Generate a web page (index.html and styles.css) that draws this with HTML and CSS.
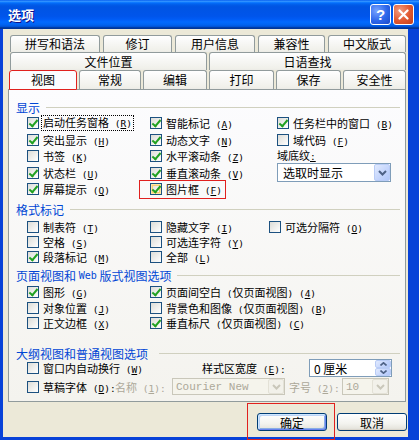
FILE: index.html
```html
<!DOCTYPE html>
<html lang="zh-CN">
<head>
    <meta charset="UTF-8">
    <meta name="viewport" content="width=device-width, initial-scale=1.0">
    <title>选项</title>
    <link rel="stylesheet" href="styles.css">
</head>
<body>
    <div class="window">
        <div class="titlebar">
            <span class="title">选项</span>
            <span class="tbtn help">?</span>
            <span class="tbtn close">
                <svg width="11" height="11" viewBox="0 0 11 11"><path d="M1.5 1.5l8 8M9.5 1.5l-8 8" stroke="#fff" stroke-width="2.2" stroke-linecap="round"/></svg>
            </span>
        </div>

        <div class="client">
            <!-- 3段のタブ -->
            <div class="tabs">
                <div class="tabrow row1">
                    <span class="tab">拼写和语法</span>
                    <span class="tab">修订</span>
                    <span class="tab">用户信息</span>
                    <span class="tab">兼容性</span>
                    <span class="tab">中文版式</span>
                </div>
                <div class="tabrow row2">
                    <span class="tab">文件位置</span>
                    <span class="tab">日语查找</span>
                </div>
                <div class="tabrow row3">
                    <span class="tab active">视图</span>
                    <span class="tab">常规</span>
                    <span class="tab">编辑</span>
                    <span class="tab">打印</span>
                    <span class="tab">保存</span>
                    <span class="tab">安全性</span>
                </div>
            </div>

            <div class="panel">
                <div class="sec">显示</div>
                <div class="grp g1">
                    <div class="item"><span class="cb on"></span><span class="t focus">启动任务窗格<span class="k"> (<u>R</u>)</span></span></div>
                    <div class="item"><span class="cb on"></span><span class="t">突出显示<span class="k"> (<u>H</u>)</span></span></div>
                    <div class="item"><span class="cb"></span><span class="t">书签<span class="k"> (<u>K</u>)</span></span></div>
                    <div class="item"><span class="cb on"></span><span class="t">状态栏<span class="k"> (<u>U</u>)</span></span></div>
                    <div class="item"><span class="cb on"></span><span class="t">屏幕提示<span class="k"> (<u>Q</u>)</span></span></div>

                    <div class="item"><span class="cb on"></span><span class="t">智能标记<span class="k"> (<u>A</u>)</span></span></div>
                    <div class="item"><span class="cb on"></span><span class="t">动态文字<span class="k"> (<u>N</u>)</span></span></div>
                    <div class="item"><span class="cb on"></span><span class="t">水平滚动条<span class="k"> (<u>Z</u>)</span></span></div>
                    <div class="item"><span class="cb on"></span><span class="t">垂直滚动条<span class="k"> (<u>V</u>)</span></span></div>
                    <div class="item mark"><span class="cb on hot"></span><span class="t">图片框<span class="k"> (<u>F</u>)</span></span></div>

                    <div class="item"><span class="cb on"></span><span class="t">任务栏中的窗口<span class="k"> (<u>B</u>)</span></span></div>
                    <div class="item"><span class="cb"></span><span class="t">域代码<span class="k"> (<u>F</u>)</span></span></div>
                    <div class="shade">
                        <div class="shade-label">域底纹<u class="k">:</u></div>
                        <div class="combo">
                            <span class="val">选取时显示</span>
                            <span class="drop">
                                <svg width="9" height="6" viewBox="0 0 9 6"><path d="M1 1l3.5 3.5L8 1" stroke="#4D6185" stroke-width="2" fill="none"/></svg>
                            </span>
                        </div>
                    </div>
                </div>

                <div class="sec s2">格式标记</div>
                <div class="grp g2">
                    <div class="item"><span class="cb"></span><span class="t">制表符<span class="k"> (<u>T</u>)</span></span></div>
                    <div class="item"><span class="cb"></span><span class="t">空格<span class="k"> (<u>S</u>)</span></span></div>
                    <div class="item"><span class="cb on"></span><span class="t">段落标记<span class="k"> (<u>M</u>)</span></span></div>

                    <div class="item"><span class="cb"></span><span class="t">隐藏文字<span class="k"> (<u>I</u>)</span></span></div>
                    <div class="item"><span class="cb"></span><span class="t">可选连字符<span class="k"> (<u>Y</u>)</span></span></div>
                    <div class="item"><span class="cb"></span><span class="t">全部<span class="k"> (<u>L</u>)</span></span></div>

                    <div class="item"><span class="cb"></span><span class="t">可选分隔符<span class="k"> (<u>O</u>)</span></span></div>
                </div>

                <div class="sec s3">页面视图和 <span class="k">Web</span> 版式视图选项</div>
                <div class="grp g3">
                    <div class="item"><span class="cb on"></span><span class="t">图形<span class="k"> (<u>G</u>)</span></span></div>
                    <div class="item"><span class="cb"></span><span class="t">对象位置<span class="k"> (<u>J</u>)</span></span></div>
                    <div class="item"><span class="cb"></span><span class="t">正文边框<span class="k"> (<u>X</u>)</span></span></div>

                    <div class="item"><span class="cb on"></span><span class="t">页面间空白<span class="k"> (</span>仅页面视图<span class="k">) (<u>4</u>)</span></span></div>
                    <div class="item"><span class="cb"></span><span class="t">背景色和图像<span class="k"> (</span>仅页面视图<span class="k">) (<u>B</u>)</span></span></div>
                    <div class="item"><span class="cb on"></span><span class="t">垂直标尺<span class="k"> (</span>仅页面视图<span class="k">) (<u>C</u>)</span></span></div>
                </div>

                <div class="sec s4">大纲视图和普通视图选项</div>
                <div class="opt rowa">
                    <div class="item"><span class="cb"></span><span class="t">窗口内自动换行<span class="k"> (<u>W</u>)</span></span></div>
                    <span class="lbl-width">样式区宽度<span class="k"> (<u>E</u>):</span></span>
                    <div class="spin">
                        <span class="val">0 厘米</span>
                        <span class="spin-btns">
                            <span class="sb"><svg width="7" height="4" viewBox="0 0 7 4"><path d="M0.5 3.5L3.5 0.8L6.5 3.5" stroke="#4D6185" stroke-width="1.6" fill="none"/></svg></span>
                            <span class="sb"><svg width="7" height="4" viewBox="0 0 7 4"><path d="M0.5 0.5L3.5 3.2L6.5 0.5" stroke="#4D6185" stroke-width="1.6" fill="none"/></svg></span>
                        </span>
                    </div>
                </div>
                <div class="opt rowb">
                    <div class="item"><span class="cb"></span><span class="t">草稿字体<span class="k"> (<u>D</u>):</span></span></div>
                    <span class="dis lbl-name">名称<span class="k"> (<u>1</u>):</span></span>
                    <div class="combo disabled font">
                        <span class="val">Courier New</span>
                        <span class="drop">
                            <svg width="9" height="6" viewBox="0 0 9 6"><path d="M1 1l3.5 3.5L8 1" stroke="#C9C7BA" stroke-width="2" fill="none"/></svg>
                        </span>
                    </div>
                    <span class="dis lbl-size">字号<span class="k"> (<u>2</u>):</span></span>
                    <div class="combo disabled size">
                        <span class="val">10</span>
                        <span class="drop">
                            <svg width="9" height="6" viewBox="0 0 9 6"><path d="M1 1l3.5 3.5L8 1" stroke="#C9C7BA" stroke-width="2" fill="none"/></svg>
                        </span>
                    </div>
                </div>
            </div>

            <div class="buttons">
                <span class="btn default mark">确定</span>
                <span class="btn">取消</span>
            </div>
        </div>
    </div>
</body>
</html>
```

FILE: styles.css
```css
* {
    box-sizing: border-box;
}

body {
    margin: 0;
    background: #0842D8;
    font-family: "Noto Sans CJK SC", "Noto Sans", sans-serif;
    font-size: 11px;
    color: #000;
}

.window {
    width: 419px;
    height: 440px;
    display: flex;
    flex-direction: column;
    background: #0842D8;
}

/* タイトルバー */
.titlebar {
    height: 29px;
    flex: none;
    display: flex;
    align-items: center;
    padding: 0 5px 0 8px;
    background: linear-gradient(to bottom, #0058EE 0%, #3593FF 4%, #288EFF 6%, #127DFF 8%, #036FFC 10%, #0262EE 14%, #0057E5 20%, #0054E3 24%, #0055EB 56%, #005BF5 66%, #026AFE 76%, #0062EF 86%, #0052D6 92%, #0040AB 94%, #003092 100%);
}

.title {
    flex: 1;
    color: #fff;
    font-size: 13px;
    font-weight: bold;
    text-shadow: 1px 1px 0 #0F1089;
}

.tbtn {
    width: 21px;
    height: 21px;
    margin-left: 2px;
    border: 1px solid #fff;
    border-radius: 3px;
    display: flex;
    align-items: center;
    justify-content: center;
}

.help {
    background: radial-gradient(circle at 30% 30%, #77A4FF, #2D66EA 55%, #1B49C9);
    color: #fff;
    font: bold 15px "Liberation Sans", sans-serif;
}

.close {
    background: radial-gradient(circle at 30% 30%, #F39C7F, #E0572F 55%, #C2401C);
}

/* 本体 */
.client {
    flex: 1;
    margin: 0 11px 3px 3px;
    background: #ECE9D8;
    padding: 6px 2px 0 5px;
}

.tabs {
    padding-left: 2px;
}

.tabrow {
    display: flex;
}

.row1 { height: 17px; gap: 3px; }
.row2 { height: 18px; gap: 2px; }
.row3 { height: 19px; gap: 2px; }

.tab {
    flex: none;
    border: 1px solid #919B9C;
    border-bottom: none;
    border-radius: 3px 3px 0 0;
    background: linear-gradient(#FFFFFF, #FAFAF9 26%, #F0F0EA 90%, #ECEBE6);
    font-size: 12px;
    text-align: center;
    white-space: nowrap;
}

.row1 .tab { line-height: 16px; }
.row2 .tab { line-height: 17px; width: 197px; }
.row3 .tab { line-height: 18px; }

.row1 .tab:nth-child(1) { width: 90px; }
.row1 .tab:nth-child(2) { width: 69px; }
.row1 .tab:nth-child(3) { width: 80px; }
.row1 .tab:nth-child(4) { width: 67px; }
.row1 .tab:nth-child(5) { width: 78px; }

.row3 .tab:nth-child(2) { width: 62px; }
.row3 .tab:nth-child(3) { width: 64px; }
.row3 .tab:nth-child(4) { width: 65px; }
.row3 .tab:nth-child(5) { width: 65px; }
.row3 .tab:nth-child(6) { width: 63px; }

.tab.active {
    width: 68px;
    height: 20px;
    margin-left: -1px;
    border: 1px solid #E0201E;
    background: #FCFCFE;
    position: relative;
    z-index: 1;
}

.panel {
    height: 313px;
    border: 1px solid #919B9C;
    background: linear-gradient(#FCFCFE, #F4F3EE);
    padding: 10px 0 0 7px;
}

/* 半角部分（アクセスキー等） */
.k {
    font-family: "DejaVu Sans Mono", monospace;
    font-size: 9.5px;
}

/* セクション見出し */
.sec {
    display: flex;
    align-items: center;
    height: 14px;
    font-size: 12px;
    color: #0046D5;
    white-space: pre;
}

.sec .k {
    font-size: 10px;
}

.sec::after {
    content: "";
    flex: 1;
    height: 1px;
    background: #D0D0BF;
    margin: 0 5px 0 6px;
}

.s2 { margin-top: 4.5px; }
.s3 { margin-top: 3.5px; }
.s4 { margin-top: 16px; height: 12px; }
.s4::after { margin-left: 11px; }

.grp {
    display: grid;
    grid-auto-flow: column;
    margin-left: 11px;
}

.g1 {
    grid-template-columns: 123px 127px 114px;
    grid-template-rows: repeat(5, 16.5px);
    margin-top: 1px;
}

.g2 {
    grid-template-columns: 123px 119px auto;
    grid-template-rows: repeat(3, 15px);
    margin-top: 3.5px;
}

.g3 {
    grid-template-columns: 123px auto;
    grid-template-rows: repeat(3, 15.5px);
    margin-top: 2.5px;
}

.item {
    display: flex;
    align-items: center;
    gap: 4px;
    white-space: pre;
}

.cb {
    flex: none;
    width: 12px;
    height: 12px;
    border: 1px solid #1C5180;
    background: linear-gradient(135deg, #DCDCD7, #FFFFFF);
    position: relative;
}

.cb.on::after {
    content: "";
    position: absolute;
    left: 3px;
    top: 0px;
    width: 3px;
    height: 7px;
    border: solid #21A121;
    border-width: 0 2px 2px 0;
    transform: rotate(40deg);
}

.cb.hot {
    box-shadow: inset 0 0 0 1px #FDE5A6, inset 0 0 0 2px #F8CF75;
}

.focus {
    outline: 1px dotted #000;
    line-height: 13px;
    padding: 0 1px;
    margin-left: -1px;
}

.mark {
    position: relative;
}

.mark::after {
    content: "";
    position: absolute;
    border: 1px solid #E0201E;
}

.item.mark::after {
    left: -11px;
    top: -1px;
    width: 85px;
    height: 17px;
}

/* コンボボックス */
.shade {
    grid-row: span 3;
}

.shade-label {
    height: 14px;
    line-height: 14px;
    margin-bottom: 1px;
}

.combo {
    height: 19px;
    border: 1px solid #7F9DB9;
    background: #fff;
    display: flex;
    align-items: center;
    padding-left: 5px;
    font-size: 12px;
}

.combo .val {
    flex: 1;
    white-space: nowrap;
}

.drop {
    width: 16px;
    height: 17px;
    border: 1px solid #B9CCF6;
    border-radius: 2px;
    background: linear-gradient(135deg, #E1EAFE, #C3D4FC 60%, #B1C7F8);
    display: flex;
    align-items: center;
    justify-content: center;
}

.combo.disabled {
    height: 17px;
    border-color: #C9C7BA;
    background: #F5F4EC;
    color: #ACA899;
    padding-left: 3px;
}

.combo.disabled .drop {
    height: 15px;
    border-color: #E3E1D6;
    background: #F2F1EA;
}

.combo.font {
    width: 113px;
    font-family: "Liberation Mono", monospace;
    font-size: 11px;
}

.combo.size {
    width: 47px;
    font-family: "Liberation Mono", monospace;
    font-size: 11px;
}

/* 大纲视图 */
.opt {
    display: flex;
    align-items: center;
    margin-left: 11px;
    white-space: pre;
}

.rowa { height: 18px; }
.rowb { height: 17px; margin-top: 1px; }

.rowa .item { width: 175px; }
.rowb .item { width: 86px; }

.lbl-width { width: 107px; }

.dis { color: #ACA899; }
.lbl-name { width: 57px; margin-left: 2px; }
.lbl-size { width: 53px; margin-left: 4px; }

.spin {
    width: 83px;
    height: 18px;
    border: 1px solid #7F9DB9;
    background: #fff;
    display: flex;
    align-items: center;
    padding: 0 0 0 4px;
    font-size: 12px;
}

.spin .val { flex: 1; }

.spin-btns {
    width: 16px;
    height: 16px;
    display: flex;
    flex-direction: column;
}

.sb {
    flex: 1;
    border: 1px solid #B9CCF6;
    border-radius: 2px;
    background: linear-gradient(135deg, #E1EAFE, #C3D4FC 60%, #B1C7F8);
    display: flex;
    align-items: center;
    justify-content: center;
}

/* ボタン */
.buttons {
    display: flex;
    justify-content: flex-end;
    gap: 10px;
    margin: 11px -1px 0 0;
}

.btn {
    width: 70px;
    height: 18px;
    border: 1px solid #003C74;
    border-radius: 3px;
    background: linear-gradient(#FFFFFF, #F3F3EF 60%, #E6E5DE 90%, #D6D0C5);
    font-size: 12px;
    display: flex;
    align-items: center;
    justify-content: center;
}

.btn.default {
    box-shadow: inset 1px 1px 0 #CEE7FF, inset -1px -1px 0 #6982EE, inset 2px 2px 0 #BCD4F6, inset -2px -2px 0 #89ADE4;
}

.btn.mark::after {
    left: -11px;
    top: -11px;
    width: 86px;
    height: 35px;
}
```
